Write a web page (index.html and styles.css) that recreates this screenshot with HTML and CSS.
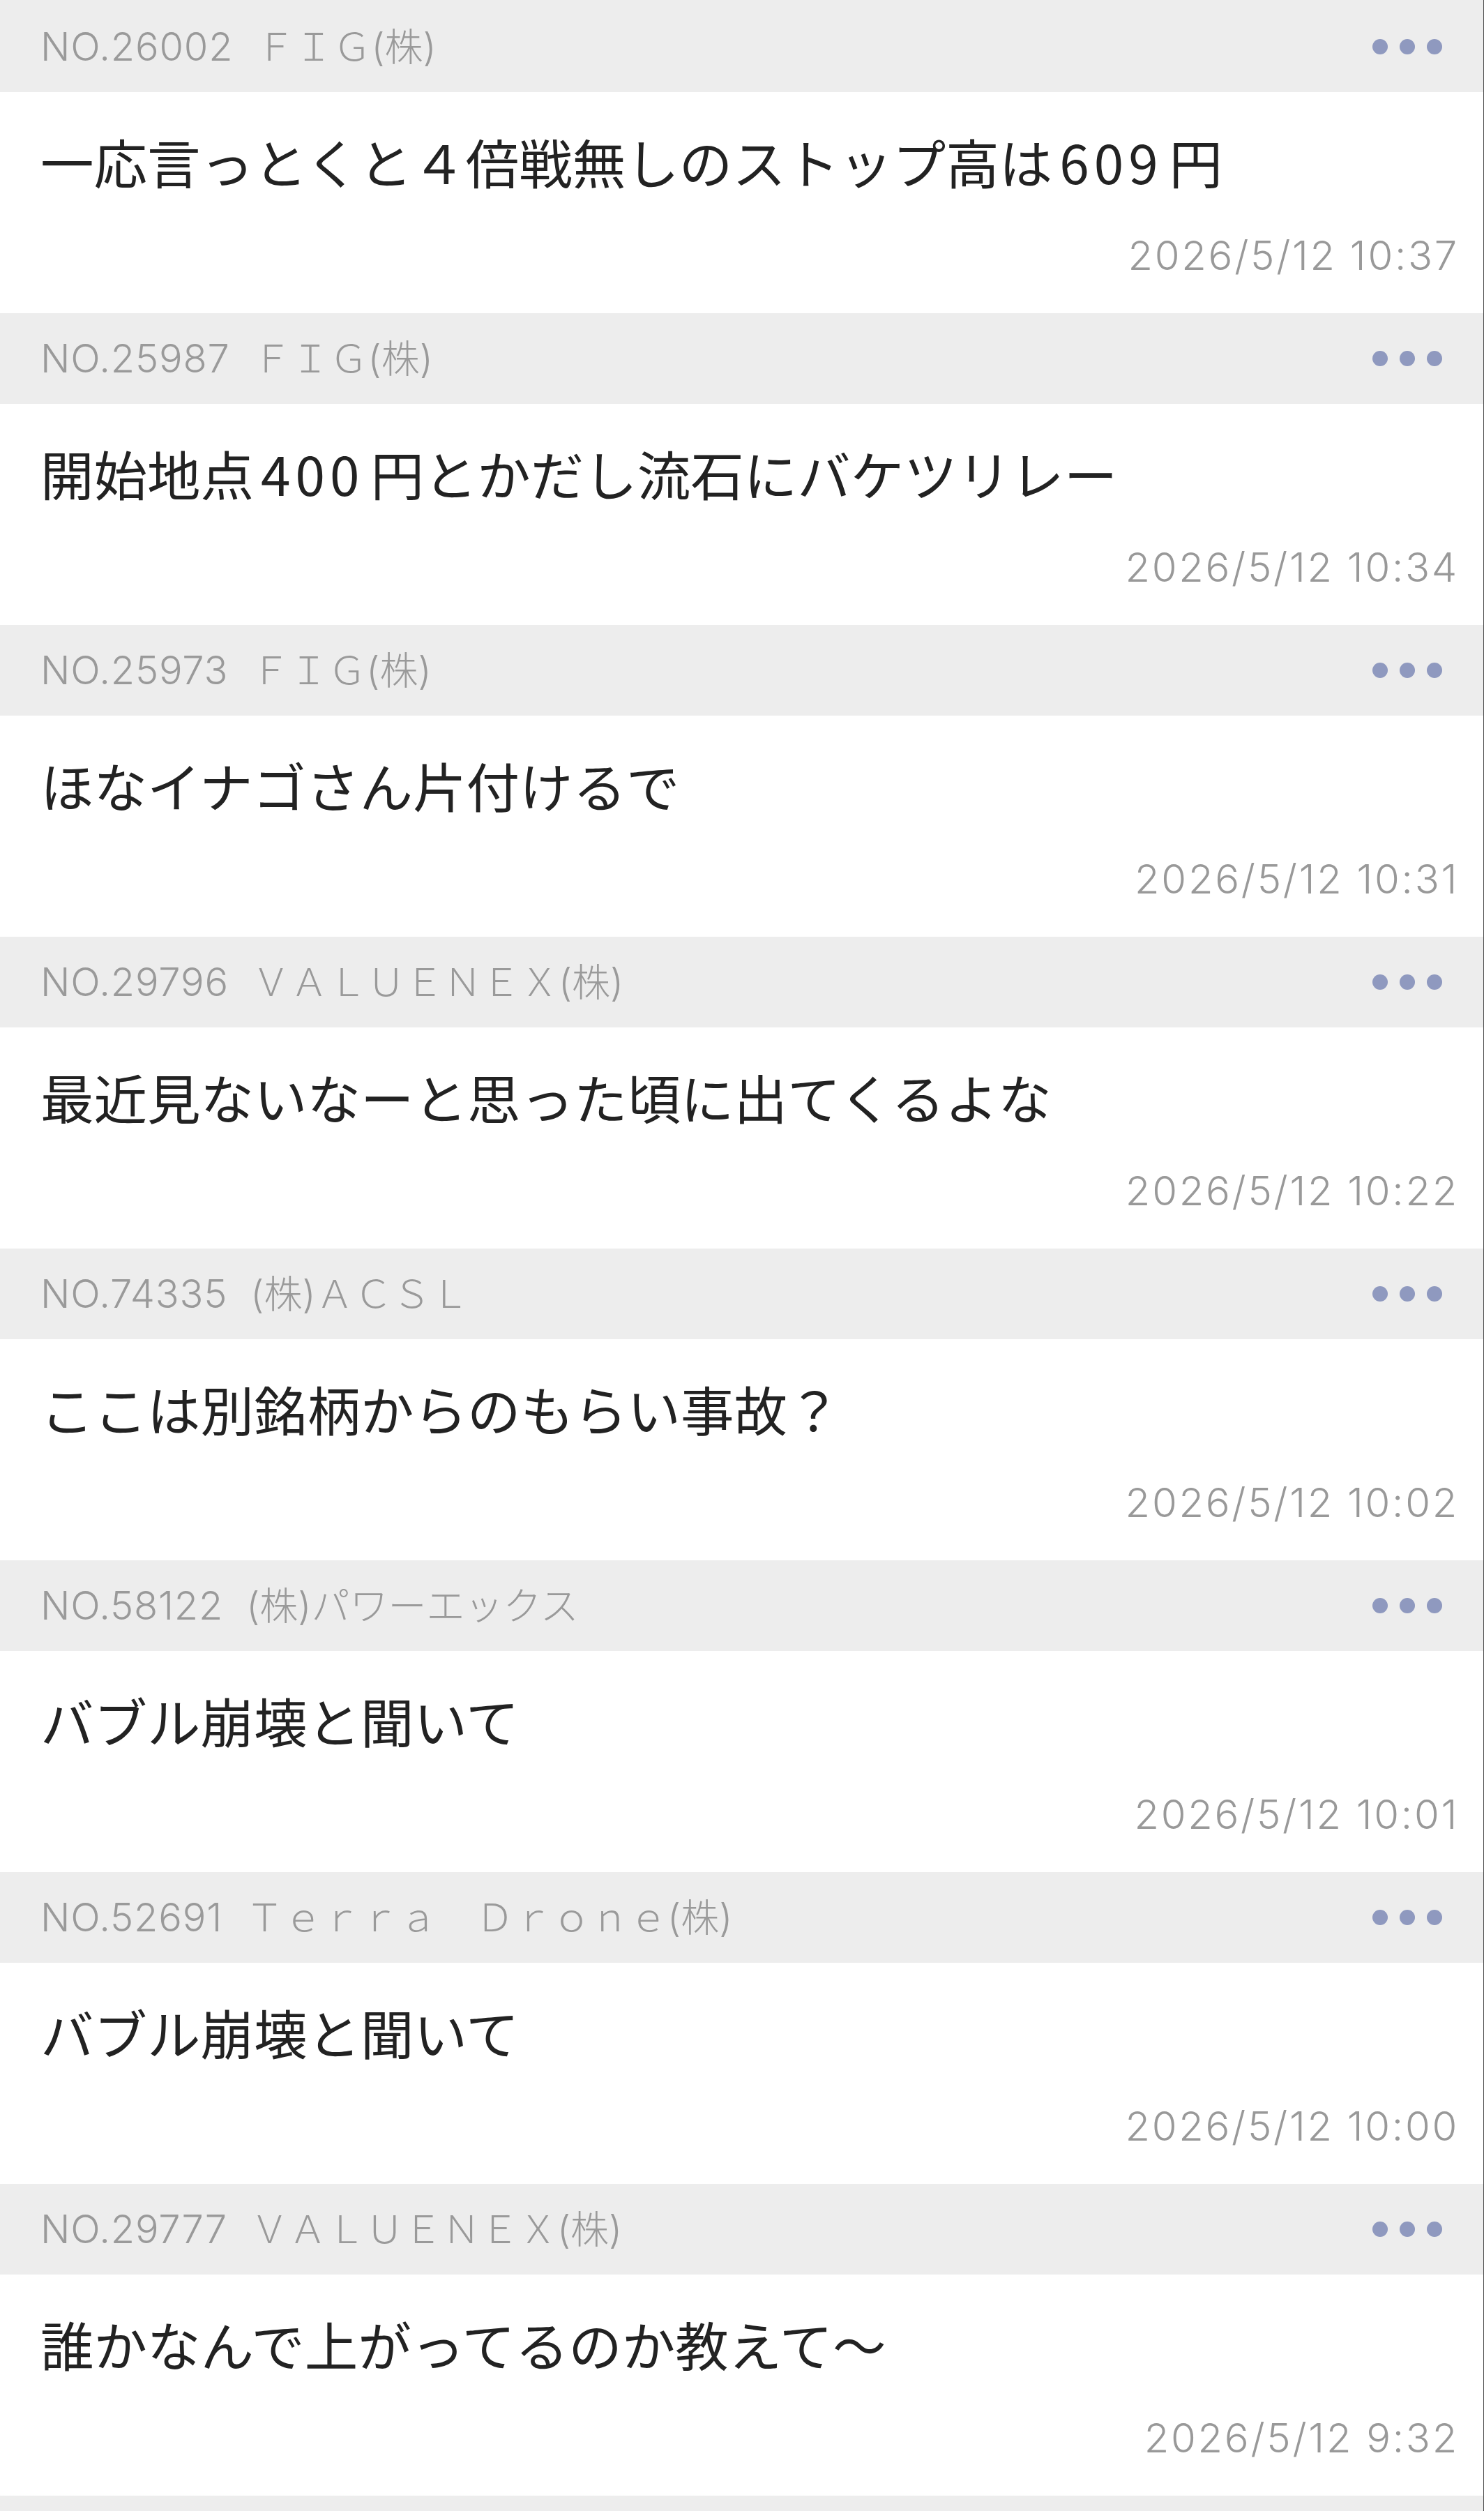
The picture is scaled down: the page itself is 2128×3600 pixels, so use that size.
FILE: index.html
```html
<!DOCTYPE html>
<html lang="ja">
<head>
<meta charset="utf-8">
<title>掲示板</title>
<link rel="stylesheet" href="styles.css">
</head>
<body>
<div class="list">
  <article class="post">
    <div class="post-head"><span class="post-id"><span class="post-no">NO.26002</span><span class="post-name">ＦＩＧ(株)</span></span><span class="more"><i></i><i></i><i></i></span></div>
    <div class="post-body"><p class="post-text">一応言っとくと４倍戦無しのストップ高は<span class="num">609</span>円</p><p class="post-time">2026/5/12 10:37</p></div>
  </article>
  <article class="post">
    <div class="post-head"><span class="post-id"><span class="post-no">NO.25987</span><span class="post-name">ＦＩＧ(株)</span></span><span class="more"><i></i><i></i><i></i></span></div>
    <div class="post-body"><p class="post-text">開始地点<span class="num">400</span>円とかだし流石にバケツリレー</p><p class="post-time">2026/5/12 10:34</p></div>
  </article>
  <article class="post">
    <div class="post-head"><span class="post-id"><span class="post-no">NO.25973</span><span class="post-name">ＦＩＧ(株)</span></span><span class="more"><i></i><i></i><i></i></span></div>
    <div class="post-body"><p class="post-text">ほなイナゴさん片付けるで</p><p class="post-time">2026/5/12 10:31</p></div>
  </article>
  <article class="post">
    <div class="post-head"><span class="post-id"><span class="post-no">NO.29796</span><span class="post-name">ＶＡＬＵＥＮＥＸ(株)</span></span><span class="more"><i></i><i></i><i></i></span></div>
    <div class="post-body"><p class="post-text">最近見ないなーと思った頃に出てくるよな</p><p class="post-time">2026/5/12 10:22</p></div>
  </article>
  <article class="post">
    <div class="post-head"><span class="post-id"><span class="post-no">NO.74335</span><span class="post-name">(株)ＡＣＳＬ</span></span><span class="more"><i></i><i></i><i></i></span></div>
    <div class="post-body"><p class="post-text">ここは別銘柄からのもらい事故？</p><p class="post-time">2026/5/12 10:02</p></div>
  </article>
  <article class="post">
    <div class="post-head"><span class="post-id"><span class="post-no">NO.58122</span><span class="post-name">(株)パワーエックス</span></span><span class="more"><i></i><i></i><i></i></span></div>
    <div class="post-body"><p class="post-text">バブル崩壊と聞いて</p><p class="post-time">2026/5/12 10:01</p></div>
  </article>
  <article class="post">
    <div class="post-head"><span class="post-id"><span class="post-no">NO.52691</span><span class="post-name">Ｔｅｒｒａ　Ｄｒｏｎｅ(株)</span></span><span class="more"><i></i><i></i><i></i></span></div>
    <div class="post-body"><p class="post-text">バブル崩壊と聞いて</p><p class="post-time">2026/5/12 10:00</p></div>
  </article>
  <article class="post">
    <div class="post-head"><span class="post-id"><span class="post-no">NO.29777</span><span class="post-name">ＶＡＬＵＥＮＥＸ(株)</span></span><span class="more"><i></i><i></i><i></i></span></div>
    <div class="post-body"><p class="post-text">誰かなんで上がってるのか教えて～</p><p class="post-time">2026/5/12 9:32</p></div>
  </article>
  <article class="post">
    <div class="post-head"><span class="post-id"></span><span class="more"><i></i><i></i><i></i></span></div>
  </article>
</div>
</body>
</html>
```
FILE: styles.css
```css
html, body {
  margin: 0;
  padding: 0;
  background: #f3f3f3;
}

.list {
  width: 2128px;
  box-sizing: border-box;
  padding-top: 2px;
  border-right: 1px solid #4a4a4a;
  background: #ededed;
}

.post-head {
  height: 130px;
  box-sizing: border-box;
  background: #ededed;
  display: flex;
  align-items: center;
  justify-content: space-between;
  padding: 0 59px 0 58px;
}

.post-id {
  display: flex;
  align-items: baseline;
  gap: 33px;
  font-family: "Inter", "Noto Sans CJK JP", sans-serif;
  font-weight: 300;
  font-size: 56px;
  line-height: 1;
  color: #9a9a9a;
  white-space: pre;
}

.post-no {
  letter-spacing: 0.8px;
}

.post-name {
  font-size: 55px;
}

.more {
  display: flex;
  gap: 17px;
}

.more i {
  display: block;
  width: 22px;
  height: 22px;
  border-radius: 50%;
  background: #8f99bf;
}

.post-body {
  background: #ffffff;
  height: 317px;
  box-sizing: border-box;
  padding: 52px 35px 0 58px;
  display: flex;
  flex-direction: column;
}

.post-text {
  margin: 0;
  font-family: "Noto Sans CJK JP", sans-serif;
  font-weight: 400;
  font-size: 76.5px;
  line-height: 94px;
  color: #222222;
  white-space: nowrap;
}

.num {
  letter-spacing: 7px;
  margin: 0 9px 0 10px;
}

.post-time {
  margin: 53px 0 0;
  text-align: right;
  font-family: "Inter", "Liberation Sans", sans-serif;
  font-weight: 300;
  font-size: 58px;
  line-height: 70px;
  letter-spacing: 2.7px;
  color: #999999;
}
```
